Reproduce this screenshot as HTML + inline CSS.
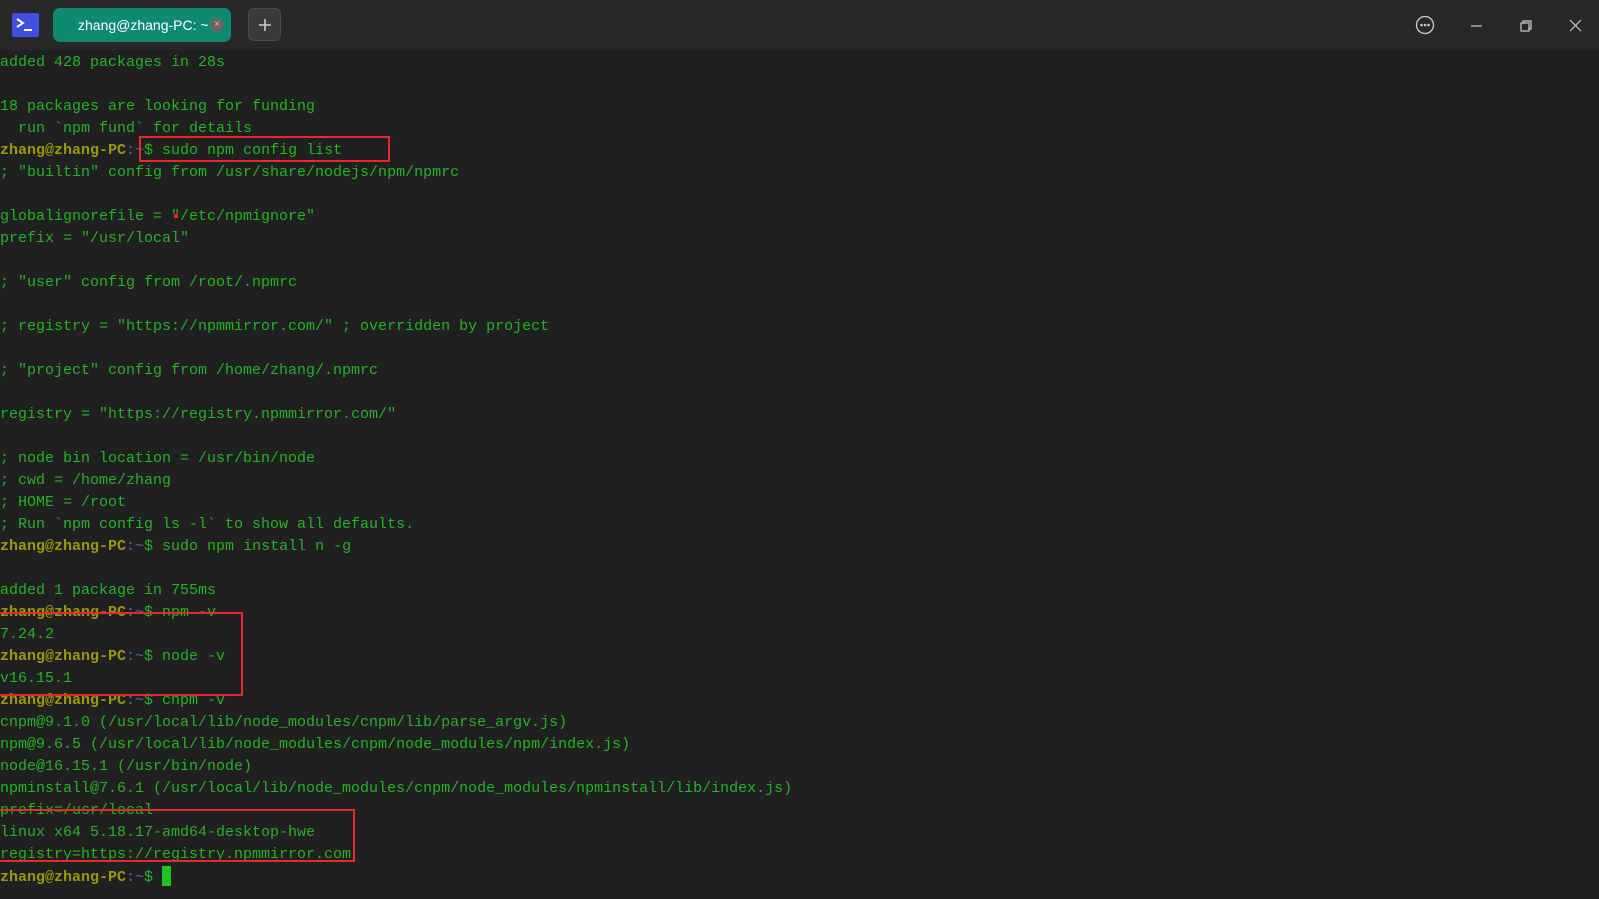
<!DOCTYPE html>
<html><head><meta charset="utf-8"><style>
html,body{margin:0;padding:0;width:1599px;height:899px;overflow:hidden;background:#202020;}
.hdr{position:absolute;left:0;top:0;width:1599px;height:50px;background:#282828;}
.term{position:absolute;left:0;top:52px;font-family:"Liberation Mono",monospace;font-size:15px;line-height:22px;color:#22b422;white-space:pre;}
.p{color:#9a9a08;font-weight:bold}
.c{color:#4a6fa8}
.d{color:#22b422}
.box{position:absolute;border:2px solid #e8282c;box-sizing:border-box;}
.tab{position:absolute;left:53px;top:8px;width:178px;height:34px;background:#0f8a72;border-radius:7px;color:#fff;font-family:"Liberation Sans",sans-serif;font-size:14px;line-height:34px;}
</style></head><body>
<div class="hdr">
  <svg style="position:absolute;left:12px;top:13px" width="27" height="24"><rect width="27" height="24" rx="2" fill="#3f4fe6"/><path d="M5 6l6 4-6 4" stroke="#fff" stroke-width="2" fill="none"/><path d="M12 17h8" stroke="#fff" stroke-width="2"/></svg>
  <div class="tab"><span style="position:absolute;left:25px">zhang@zhang-PC: ~</span><span style="position:absolute;left:157px;top:10px;width:14px;height:14px;border-radius:7px;background:#666;color:#ccc;font-size:10px;line-height:14px;text-align:center">×</span></div>
  <div style="position:absolute;left:248px;top:8px;width:33px;height:33px;background:#3a3a3a;border:1px solid #4a4a4a;border-radius:6px;box-sizing:border-box"><svg width="33" height="33"><path d="M16 10v12M10 16h12" stroke="#ccc" stroke-width="1.6"/></svg></div>
  <svg style="position:absolute;left:1410px;top:10px" width="180" height="30">
    <circle cx="15" cy="15" r="8.5" stroke="#ccc" stroke-width="1.3" fill="none"/><circle cx="11.5" cy="15" r="1.3" fill="#ccc"/><circle cx="15" cy="15" r="1.3" fill="#ccc"/><circle cx="18.5" cy="15" r="1.3" fill="#ccc"/>
    <path d="M61 16h11" stroke="#ccc" stroke-width="1.2"/>
    <rect x="111" y="13" width="8" height="8" stroke="#ccc" fill="none" stroke-width="1.2"/><path d="M113 13v-2h8v8h-2" stroke="#ccc" fill="none" stroke-width="1.2"/>
    <path d="M160 10l11 11M171 10l-11 11" stroke="#ccc" stroke-width="1.2"/>
  </svg>
</div>
<div class="term">added 428 packages in 28s

18 packages are looking for funding
  run `npm fund` for details
<span class="p">zhang@zhang-PC</span><span class="c">:~</span>$ sudo npm config list
; "builtin" config from /usr/share/nodejs/npm/npmrc

globalignorefile = "/etc/npmignore"
prefix = "/usr/local"

; "user" config from /root/.npmrc

; registry = "https://npmmirror.com/" ; overridden by project

; "project" config from /home/zhang/.npmrc

registry = "https://registry.npmmirror.com/"

; node bin location = /usr/bin/node
; cwd = /home/zhang
; HOME = /root
; Run `npm config ls -l` to show all defaults.
<span class="p">zhang@zhang-PC</span><span class="c">:~</span>$ sudo npm install n -g

added 1 package in 755ms
<span class="p">zhang@zhang-PC</span><span class="c">:~</span>$ npm -v
7.24.2
<span class="p">zhang@zhang-PC</span><span class="c">:~</span>$ node -v
v16.15.1
<span class="p">zhang@zhang-PC</span><span class="c">:~</span>$ cnpm -v
cnpm@9.1.0 (/usr/local/lib/node_modules/cnpm/lib/parse_argv.js)
npm@9.6.5 (/usr/local/lib/node_modules/cnpm/node_modules/npm/index.js)
node@16.15.1 (/usr/bin/node)
npminstall@7.6.1 (/usr/local/lib/node_modules/cnpm/node_modules/npminstall/lib/index.js)
prefix=/usr/local
linux x64 5.18.17-amd64-desktop-hwe
registry=https://registry.npmmirror.com
<span class="p">zhang@zhang-PC</span><span class="c">:~</span>$ <span style="display:inline-block;width:9px;height:20px;background:#1fc21f;vertical-align:-5px"></span></div>
<div style="position:absolute;left:174px;top:214px;width:4px;height:4px;background:#e8282c"></div>
<div class="box" style="left:139px;top:136px;width:251px;height:26px"></div>
<div class="box" style="left:-2px;top:612px;width:245px;height:84px"></div>
<div class="box" style="left:-2px;top:809px;width:357px;height:53px"></div>
</body></html>
